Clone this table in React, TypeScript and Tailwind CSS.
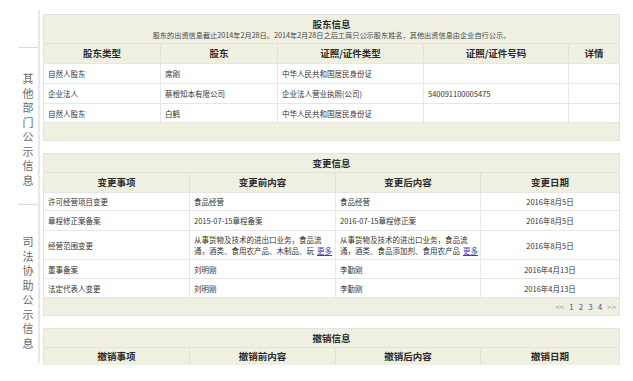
const COLS1 = "grid grid-cols-[116px_117px_146px_145px_1fr]";
const COLS2 = "grid grid-cols-[145px_146px_145px_1fr]";

function SideTab({ text, className }: { text: string; className: string }) {
  return (
    <div className={`w-[20px] border-t border-[#d9d9d9] flex flex-col items-center text-[11px] leading-[14.5px] text-[#6a6a6a] ${className}`}>
      {text.split("").map((c, i) => (
        <span key={i}>{c}</span>
      ))}
    </div>
  );
}

function HeadRow({ cols, items, h }: { cols: string; items: string[]; h: string }) {
  return (
    <div className={`${cols} ${h} bg-[#f0f0e2] border-t border-[#e4e4d4]`}>
      {items.map((t, i) => (
        <div
          key={i}
          className={`flex items-center justify-center font-bold text-[9.5px] text-[#2a2a2a] ${i > 0 ? "border-l border-[#e2e2d2]" : ""}`}
        >
          {t}
        </div>
      ))}
    </div>
  );
}

function More() {
  return <span className="ml-[3px] text-[#3344bb] underline">更多</span>;
}

type Cell = { text: React.ReactNode; center?: boolean };

function BodyRow({ cols, cells, h }: { cols: string; cells: Cell[]; h: string }) {
  return (
    <div className={`${cols} ${h} bg-white border-t border-[#e6e6e6]`}>
      {cells.map((c, i) => (
        <div
          key={i}
          className={`flex items-center px-[4px] text-[7.5px] leading-[11px] text-[#333] whitespace-nowrap ${c.center ? "justify-center" : ""} ${i > 0 ? "border-l border-[#e6e6e6]" : ""}`}
        >
          <div>{c.text}</div>
        </div>
      ))}
    </div>
  );
}

const holders = [
  ["自然人股东", "席刚", "中华人民共和国居民身份证", "", ""],
  ["企业法人", "蔡根知本有限公司", "企业法人营业执照(公司)", "540091100005475", ""],
  ["自然人股东", "白鹤", "中华人民共和国居民身份证", "", ""],
];

const changes: { cells: Cell[]; h: string }[] = [
  {
    h: "h-[18px]",
    cells: [{ text: "许可经营项目变更" }, { text: "食品经营" }, { text: "食品经营" }, { text: "2016年8月5日", center: true }],
  },
  {
    h: "h-[20px]",
    cells: [
      { text: "章程修正案备案" },
      { text: "2015-07-15章程备案" },
      { text: "2016-07-15章程修正案" },
      { text: "2016年8月5日", center: true },
    ],
  },
  {
    h: "h-[29px]",
    cells: [
      { text: "经营范围变更" },
      {
        text: (
          <>
            从事货物及技术的进出口业务，食品流
            <br />
            通，酒类、食用农产品、木制品、玩
            <More />
          </>
        ),
      },
      {
        text: (
          <>
            从事货物及技术的进出口业务，食品流
            <br />
            通，酒类、食品添加剂、食用农产品
            <More />
          </>
        ),
      },
      { text: "2016年8月5日", center: true },
    ],
  },
  {
    h: "h-[19px]",
    cells: [{ text: "董事备案" }, { text: "刘明刚" }, { text: "李勤刚" }, { text: "2016年4月13日", center: true }],
  },
  {
    h: "h-[19px]",
    cells: [{ text: "法定代表人变更" }, { text: "刘明刚" }, { text: "李勤刚" }, { text: "2016年4月13日", center: true }],
  },
];

export default function App() {
  return (
    <div className="w-[633px] h-[381px] bg-white flex items-start font-['Noto_Sans_CJK_SC','Liberation_Sans',sans-serif] overflow-hidden">
      <aside className="mt-[10px] h-[353px] w-[40px] shrink-0 border-r-2 border-[#e8e8e8] flex flex-col items-end">
        <div className="h-[37px]" />
        <SideTab text="其他部门公示信息" className="h-[157px] pt-[23px]" />
        <SideTab text="司法协助公示信息" className="flex-1 pt-[29px]" />
      </aside>

      <main className="ml-[3px] mt-[14px] w-[577px] flex flex-col gap-[12px]">
        {/* 股东信息 */}
        <section className="border-x border-b border-[#e4e4d8] bg-[#f0f0e2]">
          <div className="h-[29px] flex flex-col items-center justify-center border-t border-[#e4e4d8]">
            <div className="font-bold text-[9.5px] leading-[12px] text-[#2a2a2a]">股东信息</div>
            <div className="text-[7.2px] leading-[10px] text-[#444]">
              股东的出资信息截止2014年2月28日。2014年2月28日之后工商只公示股东姓名，其他出资信息由企业自行公示。
            </div>
          </div>
          <HeadRow cols={COLS1} h="h-[20px]" items={["股东类型", "股东", "证照/证件类型", "证照/证件号码", "详情"]} />
          {holders.map((r, i) => (
            <BodyRow key={i} cols={COLS1} h={i === 2 ? "h-[19px]" : "h-[20px]"} cells={r.map((t) => ({ text: t }))} />
          ))}
          <div className="h-[18px] border-t border-[#e6e6e6]" />
        </section>

        {/* 变更信息 */}
        <section className="border-x border-b border-[#e4e4d8] bg-[#f0f0e2]">
          <div className="h-[19px] flex items-center justify-center border-t border-[#e4e4d8] font-bold text-[9.5px] text-[#2a2a2a]">
            变更信息
          </div>
          <HeadRow cols={COLS2} h="h-[20px]" items={["变更事项", "变更前内容", "变更后内容", "变更日期"]} />
          {changes.map((r, i) => (
            <BodyRow key={i} cols={COLS2} h={r.h} cells={r.cells} />
          ))}
          <div className="h-[18px] border-t border-[#e6e6e6] flex items-center justify-end gap-[5px] pr-[3px] text-[8px]">
            <span className="text-[#999]">&lt;&lt;</span>
            <span className="text-[#555]">1</span>
            <span className="text-[#4455aa]">2</span>
            <span className="text-[#4455aa]">3</span>
            <span className="text-[#4455aa]">4</span>
            <span className="text-[#999]">&gt;&gt;</span>
          </div>
        </section>

        {/* 撤销信息 */}
        <section className="border-x border-[#e4e4d8] bg-[#f0f0e2]">
          <div className="h-[19px] flex items-center justify-center border-t border-[#e4e4d8] font-bold text-[9.5px] text-[#2a2a2a]">
            撤销信息
          </div>
          <HeadRow cols={COLS2} h="h-[18px]" items={["撤销事项", "撤销前内容", "撤销后内容", "撤销日期"]} />
        </section>
      </main>
    </div>
  );
}
